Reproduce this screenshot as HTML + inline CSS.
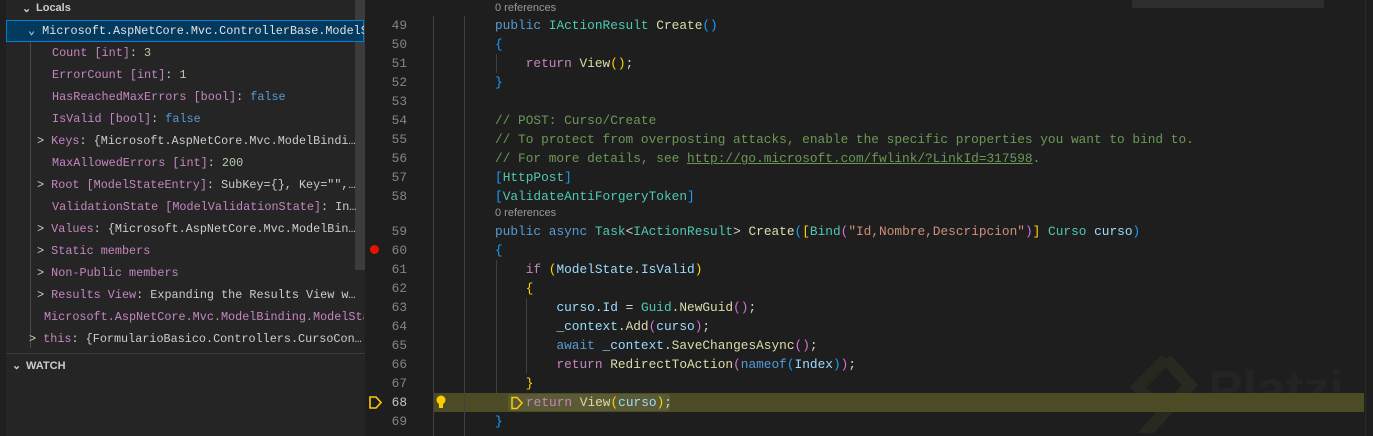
<!DOCTYPE html>
<html><head><style>
*{margin:0;padding:0;box-sizing:border-box}
body{width:1373px;height:436px;overflow:hidden;background:#1e1e1e;position:relative;font-family:"Liberation Mono",monospace}
.sb{position:absolute;left:6px;top:0;width:359px;height:436px;background:#252526}
.strip{position:absolute;left:0;top:0;width:6px;height:436px;background:#1f1f1f}
.row{position:absolute;height:22px;line-height:22px;font-size:11.8px;white-space:pre;color:#cccccc;overflow:hidden}
.n{color:#c586c0}.g{color:#cccccc}.num{color:#b5cea8}.kw{color:#569cd6}
.hdr{position:absolute;font-family:"Liberation Sans",sans-serif;font-weight:bold;font-size:11px;color:#cccccc}
.ln{position:absolute;left:370px;width:37px;text-align:right;font-size:12.8px;color:#858585;line-height:19px}
.c{position:absolute;left:495px;font-size:12.8px;white-space:pre;color:#d4d4d4;line-height:19px}
.ref{position:absolute;left:495px;font-family:"Liberation Sans",sans-serif;font-size:11px;color:#999999}
.guide{position:absolute;width:1px;background:#404040}
.b{color:#569cd6}.t{color:#4ec9b0}.f{color:#dcdcaa}.p{color:#c586c0}.v{color:#9cdcfe}.cm{color:#6a9955}.s{color:#ce9178}
.gold{color:#ffd700}.orc{color:#da70d6}.bl{color:#179fff}
</style></head><body>
<div class="strip"></div>
<div class="sb"></div>
<div style="position:absolute;left:355px;top:0;width:10px;height:270px;background:#3c3c3c"></div>
<div class="hdr" style="left:22px;top:2px">⌄</div>
<div class="hdr" style="left:36px;top:2px">Locals</div>
<div style="position:absolute;left:6px;top:20px;width:358px;height:22px;background:#04395e;border:1px solid #007fd4"></div>
<div class="row" style="left:28px;top:20px;width:336px;color:#e0e0e0">⌄ Microsoft.AspNetCore.Mvc.ControllerBase.ModelState</div>
<div style="position:absolute;left:30px;top:42px;width:1px;height:306px;background:#4a4a4a"></div>
<div class="row" style="left:52px;top:42px"><span class="n">Count [int]</span>: <span class="num">3</span></div>
<div class="row" style="left:52px;top:64px"><span class="n">ErrorCount [int]</span>: <span class="num">1</span></div>
<div class="row" style="left:52px;top:86px"><span class="n">HasReachedMaxErrors [bool]</span>: <span class="kw">false</span></div>
<div class="row" style="left:52px;top:108px"><span class="n">IsValid [bool]</span>: <span class="kw">false</span></div>
<div class="row" style="left:37px;top:130px">&gt; <span class="n">Keys</span>: {Microsoft.AspNetCore.Mvc.ModelBindi…</div>
<div class="row" style="left:52px;top:152px"><span class="n">MaxAllowedErrors [int]</span>: <span class="num">200</span></div>
<div class="row" style="left:37px;top:174px">&gt; <span class="n">Root [ModelStateEntry]</span>: SubKey={}, Key="",…</div>
<div class="row" style="left:52px;top:196px"><span class="n">ValidationState [ModelValidationState]</span>: In…</div>
<div class="row" style="left:37px;top:218px">&gt; <span class="n">Values</span>: {Microsoft.AspNetCore.Mvc.ModelBin…</div>
<div class="row" style="left:37px;top:240px">&gt; <span class="n">Static members</span></div>
<div class="row" style="left:37px;top:262px">&gt; <span class="n">Non-Public members</span></div>
<div class="row" style="left:37px;top:284px">&gt; <span class="n">Results View</span>: Expanding the Results View w…</div>
<div class="row" style="left:44px;top:306px;width:320px"><span class="n">Microsoft.AspNetCore.Mvc.ModelBinding.ModelStateDictionary</span></div>
<div class="row" style="left:29px;top:328px">&gt; <span class="n">this</span>: {FormularioBasico.Controllers.CursoCon…</div>
<div style="position:absolute;left:6px;top:353px;width:359px;height:1px;background:#3c3c3c"></div>
<div class="hdr" style="left:12px;top:359px">⌄</div>
<div class="hdr" style="left:26px;top:360px">WATCH</div>

<!-- editor -->
<div style="position:absolute;left:1132px;top:0;width:192px;height:8px;background:#2d2d2d"></div>
<svg style="position:absolute;left:1128px;top:353px" width="70" height="80"><path d="M38 6 L62 32 L38 58 L14 84" fill="none" stroke="#272a20" stroke-width="12"/><path d="M38 6 L10 34 L36 60" fill="none" stroke="#262820" stroke-width="12"/></svg>
<div style="position:absolute;left:1208px;top:360px;font-family:'Liberation Sans',sans-serif;font-size:52px;font-weight:bold;color:#242424">Platzi</div>
<div style="position:absolute;left:433px;top:393px;width:931px;height:19px;background:#4b4b26"></div>
<div style="position:absolute;left:508px;top:394px;width:162px;height:17px;background:#5a5a34;border-radius:3px"></div>
<div class="guide" style="left:433px;top:16px;height:420px"></div>
<div class="guide" style="left:464px;top:16px;height:420px"></div>
<div class="guide" style="left:496px;top:54px;height:19px"></div>
<div class="guide" style="left:496px;top:260px;height:133px"></div>
<div class="guide" style="left:526px;top:298px;height:76px"></div>
<div style="position:absolute;left:370px;top:245px;width:9px;height:9px;border-radius:50%;background:#e51400"></div>
<svg style="position:absolute;left:368px;top:395px" width="16" height="15"><path d="M2 2H8L13 7.5L8 13H2Z" fill="none" stroke="#ffcc00" stroke-width="1.6"/></svg>
<svg style="position:absolute;left:510px;top:396px" width="14" height="14"><path d="M2 1.5H7L12 7L7 12.5H2Z" fill="none" stroke="#ffcc00" stroke-width="1.5"/></svg>
<svg style="position:absolute;left:434px;top:394px" width="14" height="16"><circle cx="7" cy="6" r="4.5" fill="#ffcc00"/><rect x="5" y="10" width="4" height="4" fill="#ffcc00"/></svg>

<div class="ref" style="top:2px">0 references</div>
<div class="ref" style="top:207px">0 references</div>

<div class="ln" style="top:16px">49</div><div class="c" style="top:16px"><span class="b">public</span> <span class="t">IActionResult</span> <span class="f">Create</span><span class="bl">()</span></div>
<div class="ln" style="top:35px">50</div><div class="c" style="top:35px"><span class="bl">{</span></div>
<div class="ln" style="top:54px">51</div><div class="c" style="top:54px">    <span class="p">return</span> <span class="f">View</span><span class="gold">()</span>;</div>
<div class="ln" style="top:73px">52</div><div class="c" style="top:73px"><span class="bl">}</span></div>
<div class="ln" style="top:92px">53</div>
<div class="ln" style="top:111px">54</div><div class="c cm" style="top:111px">// POST: Curso/Create</div>
<div class="ln" style="top:130px">55</div><div class="c cm" style="top:130px">// To protect from overposting attacks, enable the specific properties you want to bind to.</div>
<div class="ln" style="top:149px">56</div><div class="c cm" style="top:149px">// For more details, see <u>http://go.microsoft.com/fwlink/?LinkId=317598</u>.</div>
<div class="ln" style="top:168px">57</div><div class="c" style="top:168px"><span class="bl">[</span><span class="t">HttpPost</span><span class="bl">]</span></div>
<div class="ln" style="top:187px">58</div><div class="c" style="top:187px"><span class="bl">[</span><span class="t">ValidateAntiForgeryToken</span><span class="bl">]</span></div>
<div class="ln" style="top:222px">59</div><div class="c" style="top:222px"><span class="b">public</span> <span class="b">async</span> <span class="t">Task</span>&lt;<span class="t">IActionResult</span>&gt; <span class="f">Create</span><span class="bl">(</span><span class="gold">[</span><span class="t">Bind</span><span class="orc">(</span><span class="s">"Id,Nombre,Descripcion"</span><span class="orc">)</span><span class="gold">]</span> <span class="t">Curso</span> <span class="v">curso</span><span class="bl">)</span></div>
<div class="ln" style="top:241px">60</div><div class="c" style="top:241px"><span class="bl">{</span></div>
<div class="ln" style="top:260px">61</div><div class="c" style="top:260px">    <span class="p">if</span> <span class="gold">(</span><span class="v">ModelState</span>.<span class="v">IsValid</span><span class="gold">)</span></div>
<div class="ln" style="top:279px">62</div><div class="c" style="top:279px">    <span class="gold">{</span></div>
<div class="ln" style="top:298px">63</div><div class="c" style="top:298px">        <span class="v">curso</span>.<span class="v">Id</span> = <span class="t">Guid</span>.<span class="f">NewGuid</span><span class="orc">()</span>;</div>
<div class="ln" style="top:317px">64</div><div class="c" style="top:317px">        <span class="v">_context</span>.<span class="f">Add</span><span class="orc">(</span><span class="v">curso</span><span class="orc">)</span>;</div>
<div class="ln" style="top:336px">65</div><div class="c" style="top:336px">        <span class="b">await</span> <span class="v">_context</span>.<span class="f">SaveChangesAsync</span><span class="orc">()</span>;</div>
<div class="ln" style="top:355px">66</div><div class="c" style="top:355px">        <span class="p">return</span> <span class="f">RedirectToAction</span><span class="orc">(</span><span class="b">nameof</span><span class="bl">(</span><span class="v">Index</span><span class="bl">)</span><span class="orc">)</span>;</div>
<div class="ln" style="top:374px">67</div><div class="c" style="top:374px">    <span class="gold">}</span></div>
<div class="ln" style="top:393px;color:#c6c6c6">68</div><div class="c" style="top:393px;left:526px"><span class="p">return</span> <span class="f">View</span><span class="gold">(</span><span class="v">curso</span><span class="gold">)</span>;</div>
<div class="ln" style="top:412px">69</div><div class="c" style="top:412px"><span class="bl">}</span></div>

<div style="position:absolute;left:1365px;top:0;width:8px;height:436px;background:#1e1e1e;border-left:1px solid #2a2a2a"></div>
</body></html>
